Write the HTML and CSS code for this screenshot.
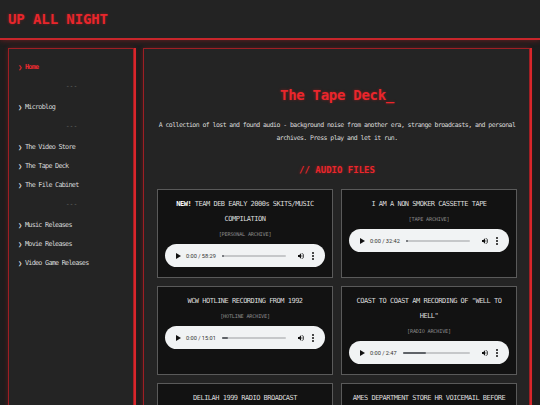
FILE: index.html
```html
<!DOCTYPE html>
<html lang="en">
<head>
    <meta charset="UTF-8">
    <meta name="viewport" content="width=device-width, initial-scale=1.0">
    <title>Up All Night - The Tape Deck</title>
    <link rel="stylesheet" href="styles.css">
</head>
<body>
    <header class="site-header">
        <h1 class="logo">UP ALL NIGHT</h1>
    </header>

    <div class="layout">
        <nav class="sidebar">
            <a class="nav-link active" href="#">Home</a>
            <div class="nav-sep">---</div>
            <a class="nav-link" href="#">Microblog</a>
            <div class="nav-sep">---</div>
            <a class="nav-link" href="#">The Video Store</a>
            <a class="nav-link" href="#">The Tape Deck</a>
            <a class="nav-link" href="#">The File Cabinet</a>
            <div class="nav-sep">---</div>
            <a class="nav-link" href="#">Music Releases</a>
            <a class="nav-link" href="#">Movie Releases</a>
            <a class="nav-link" href="#">Video Game Releases</a>
        </nav>

        <main class="main">
            <h2 class="page-title">The Tape Deck_</h2>
            <p class="intro">A collection of lost and found audio - background noise from another era, strange broadcasts, and personal archives. Press play and let it run.</p>

            <h3 class="section-title">// AUDIO FILES</h3>

            <div class="tape-grid">
                <div class="tape">
                    <div class="tape-title"><b>NEW!</b> TEAM DEB EARLY 2000s SKITS/MUSIC COMPILATION</div>
                    <div class="tape-source">[PERSONAL ARCHIVE]</div>
                    <div class="player">
                        <span class="play"></span>
                        <span class="time">0:00 / 58:29</span>
                        <span class="track"><span class="buffered" style="width:0%"></span></span>
                        <svg class="vol" viewBox="0 0 24 24"><path d="M3 9v6h4l5 5V4L7 9H3zm13.5 3c0-1.8-1-3.3-2.5-4v8c1.5-.7 2.5-2.2 2.5-4zM14 3.2v2.1c2.9.9 5 3.5 5 6.7s-2.1 5.8-5 6.7v2.1c4-.9 7-4.5 7-8.8s-3-7.9-7-8.8z"/></svg>
                        <span class="dots"></span>
                    </div>
                </div>

                <div class="tape">
                    <div class="tape-title">I AM A NON SMOKER CASSETTE TAPE</div>
                    <div class="tape-source">[TAPE ARCHIVE]</div>
                    <div class="player">
                        <span class="play"></span>
                        <span class="time">0:00 / 32:42</span>
                        <span class="track"><span class="buffered" style="width:3%"></span></span>
                        <svg class="vol" viewBox="0 0 24 24"><path d="M3 9v6h4l5 5V4L7 9H3zm13.5 3c0-1.8-1-3.3-2.5-4v8c1.5-.7 2.5-2.2 2.5-4zM14 3.2v2.1c2.9.9 5 3.5 5 6.7s-2.1 5.8-5 6.7v2.1c4-.9 7-4.5 7-8.8s-3-7.9-7-8.8z"/></svg>
                        <span class="dots"></span>
                    </div>
                </div>

                <div class="tape">
                    <div class="tape-title">WCW HOTLINE RECORDING FROM 1992</div>
                    <div class="tape-source">[HOTLINE ARCHIVE]</div>
                    <div class="player">
                        <span class="play"></span>
                        <span class="time">0:00 / 15:01</span>
                        <span class="track"><span class="buffered" style="width:9%"></span></span>
                        <svg class="vol" viewBox="0 0 24 24"><path d="M3 9v6h4l5 5V4L7 9H3zm13.5 3c0-1.8-1-3.3-2.5-4v8c1.5-.7 2.5-2.2 2.5-4zM14 3.2v2.1c2.9.9 5 3.5 5 6.7s-2.1 5.8-5 6.7v2.1c4-.9 7-4.5 7-8.8s-3-7.9-7-8.8z"/></svg>
                        <span class="dots"></span>
                    </div>
                </div>

                <div class="tape">
                    <div class="tape-title">COAST TO COAST AM RECORDING OF "WELL TO HELL"</div>
                    <div class="tape-source">[RADIO ARCHIVE]</div>
                    <div class="player">
                        <span class="play"></span>
                        <span class="time">0:00 / 2:47</span>
                        <span class="track"><span class="buffered" style="width:35%"></span></span>
                        <svg class="vol" viewBox="0 0 24 24"><path d="M3 9v6h4l5 5V4L7 9H3zm13.5 3c0-1.8-1-3.3-2.5-4v8c1.5-.7 2.5-2.2 2.5-4zM14 3.2v2.1c2.9.9 5 3.5 5 6.7s-2.1 5.8-5 6.7v2.1c4-.9 7-4.5 7-8.8s-3-7.9-7-8.8z"/></svg>
                        <span class="dots"></span>
                    </div>
                </div>

                <div class="tape">
                    <div class="tape-title">DELILAH 1999 RADIO BROADCAST</div>
                    <div class="tape-source">[RADIO ARCHIVE]</div>
                    <div class="player">
                        <span class="play"></span>
                        <span class="time">0:00 / 44:10</span>
                        <span class="track"><span class="buffered" style="width:2%"></span></span>
                        <svg class="vol" viewBox="0 0 24 24"><path d="M3 9v6h4l5 5V4L7 9H3zm13.5 3c0-1.8-1-3.3-2.5-4v8c1.5-.7 2.5-2.2 2.5-4zM14 3.2v2.1c2.9.9 5 3.5 5 6.7s-2.1 5.8-5 6.7v2.1c4-.9 7-4.5 7-8.8s-3-7.9-7-8.8z"/></svg>
                        <span class="dots"></span>
                    </div>
                </div>

                <div class="tape">
                    <div class="tape-title">AMES DEPARTMENT STORE HR VOICEMAIL BEFORE CLOSING</div>
                    <div class="tape-source">[VOICEMAIL ARCHIVE]</div>
                    <div class="player">
                        <span class="play"></span>
                        <span class="time">0:00 / 1:12</span>
                        <span class="track"><span class="buffered" style="width:20%"></span></span>
                        <svg class="vol" viewBox="0 0 24 24"><path d="M3 9v6h4l5 5V4L7 9H3zm13.5 3c0-1.8-1-3.3-2.5-4v8c1.5-.7 2.5-2.2 2.5-4zM14 3.2v2.1c2.9.9 5 3.5 5 6.7s-2.1 5.8-5 6.7v2.1c4-.9 7-4.5 7-8.8s-3-7.9-7-8.8z"/></svg>
                        <span class="dots"></span>
                    </div>
                </div>
            </div>
        </main>
    </div>
</body>
</html>
```

FILE: styles.css
```css
body {
    margin: 0;
    background-color: #1d1d1d;
    color: #dcdcdc;
    font-family: "DejaVu Sans Mono", "Liberation Mono", monospace;
}
.site-header {
    height: 38px;
    display: flex;
    align-items: center;
    padding: 0 8px;
    background-color: #232323;
    border-bottom: 2px solid #c8262b;
    box-shadow: 0 0 6px rgba(220, 30, 35, 0.45);
}
.logo {
    margin: 0;
    font-size: 14px;
    font-weight: bold;
    color: #e8262c;
    letter-spacing: -0.1px;
    text-shadow: 0 0 3px rgba(255, 30, 30, 0.4);
}
.layout {
    display: grid;
    grid-template-columns: 126px 1fr;
    gap: 9px;
    padding: 8px 10px 0 8px;
    align-items: start;
}
.sidebar, .main {
    background-color: #242424;
    border: 1px solid #9e1f24;
    box-shadow: 2px 0 0 #d8262b, 0 0 5px rgba(220, 30, 35, 0.3);
}
.sidebar {
    display: flex;
    flex-direction: column;
    padding: 9px 8px 20px 9px;
    min-height: 400px;
}
.nav-link {
    display: block;
    line-height: 19px;
    font-size: 6.8px;
    letter-spacing: -0.75px;
    color: #d8d8d8;
    text-decoration: none;
}
.nav-link::before {
    content: "\276F";
    display: inline-block;
    width: 7px;
    font-size: 5px;
    font-weight: normal;
    font-family: "DejaVu Sans", sans-serif;
}
.nav-link.active {
    color: #ee2a30;
    font-weight: bold;
}
.nav-sep {
    text-align: center;
    line-height: 19px;
    margin-bottom: 2px;
    font-size: 6.5px;
    color: #6e6e6e;
}
.main {
    padding: 13px 12px 20px 13px;
    min-height: 400px;
}
.page-title {
    margin: 23px 0 0;
    text-align: center;
    font-size: 14px;
    line-height: 20px;
    letter-spacing: -0.3px;
    color: #ea262c;
    text-shadow: 0 0 3px rgba(255, 30, 30, 0.4);
}
.intro {
    margin: 14px 0 0;
    text-align: center;
    font-size: 6.5px;
    line-height: 13px;
    letter-spacing: -0.55px;
    color: #dadada;
}
.section-title {
    margin: 18px 0 0;
    text-align: center;
    font-size: 9px;
    line-height: 14px;
    color: #ea262c;
    text-shadow: 0 0 3px rgba(255, 30, 30, 0.4);
}
.tape-grid {
    display: grid;
    grid-template-columns: 1fr 1fr;
    gap: 8px;
    margin-top: 12px;
}
.tape {
    background-color: #121212;
    border: 1px solid #5a5a5a;
    padding: 7px 7px 10px;
    text-align: center;
}
.tape-title {
    font-size: 7px;
    line-height: 15px;
    letter-spacing: -0.5px;
    color: #dcdcdc;
}
.tape-title b {
    color: #ffffff;
}
.tape-source {
    margin: 2px 0 5px;
    font-size: 5.2px;
    line-height: 10px;
    letter-spacing: -0.2px;
    color: #8a8a8a;
}
.player {
    display: flex;
    align-items: center;
    height: 23px;
    padding: 0 10px;
    border-radius: 12px;
    background-color: #f1f3f4;
}
.play {
    width: 0;
    height: 0;
    border-top: 3px solid transparent;
    border-bottom: 3px solid transparent;
    border-left: 5px solid #111;
    margin: 0 5px 0 1px;
}
.time {
    font-family: Roboto, "Liberation Sans", sans-serif;
    font-size: 5.6px;
    color: #333;
    white-space: nowrap;
}
.track {
    flex: 1;
    height: 2px;
    margin: 0 11px 0 6px;
    border-radius: 1px;
    background-color: #c6c8ca;
    display: flex;
}
.buffered {
    display: block;
    min-width: 2px;
    height: 2px;
    background-color: #5f6368;
    border-radius: 1px;
}
.vol {
    width: 8px;
    height: 8px;
    fill: #111;
}
.dots {
    width: 2px;
    height: 2px;
    margin: 0 1px 0 7px;
    border-radius: 50%;
    background-color: #111;
    box-shadow: 0 -3px 0 #111, 0 3px 0 #111;
}
```
